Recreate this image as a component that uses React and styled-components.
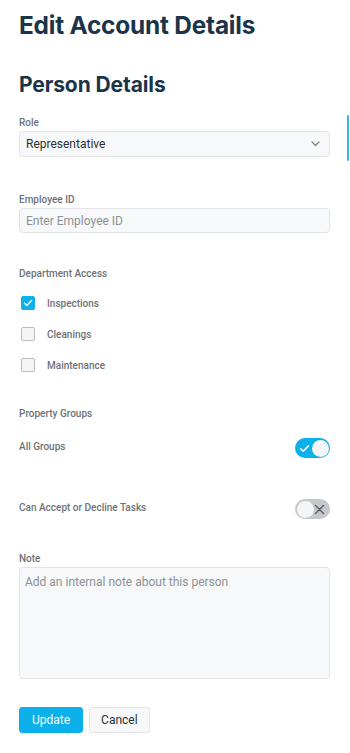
import React, { useState } from "react";
import styled, { createGlobalStyle } from "styled-components";

const GlobalStyle = createGlobalStyle`
  html, body {
    margin: 0;
    padding: 0;
    background: #ffffff;
  }
  body {
    font-family: Roboto, "Liberation Sans", Arial, sans-serif;
    -webkit-font-smoothing: antialiased;
  }
  * {
    box-sizing: border-box;
  }
`;

const Page = styled.div`
  position: relative;
  width: 350px;
  padding: 8px 20px 20px 19px;
`;

// the blue scroll indicator at the right edge
const ScrollMark = styled.div`
  position: absolute;
  right: 1px;
  top: 115px;
  width: 2px;
  height: 46px;
  background: #36b6e8;
  border-radius: 1px;
`;

const Title = styled.h1`
  margin: 0;
  font-family: Inter, "Noto Sans", sans-serif;
  font-weight: 700;
  font-size: 24.4px;
  line-height: 34px;
  letter-spacing: -0.2px;
  color: #1a3549;
`;

const Subtitle = styled.h2`
  margin: 29px 0 0;
  font-family: Inter, "Noto Sans", sans-serif;
  font-weight: 700;
  font-size: 21px;
  line-height: 28px;
  letter-spacing: -0.1px;
  color: #1a3549;
`;

const Field = styled.div`
  margin-top: ${(p) => p.$gap || 0}px;
`;

const Label = styled.div`
  font-size: 10px;
  line-height: 12px;
  font-weight: 500;
  color: #6d7278;
  margin-bottom: ${(p) => (p.$mb != null ? p.$mb : 2)}px;
`;

const SelectBox = styled.div`
  display: flex;
  align-items: center;
  justify-content: space-between;
  height: 26px;
  padding: 0 9px 0 6px;
  background: #f7f8fa;
  border: 1px solid #e2e4e8;
  border-radius: 4px;
  font-size: 12px;
  color: #2b2f33;
`;

const TextInput = styled.input`
  display: block;
  width: 100%;
  height: 25px;
  padding: 0 6px;
  background: #f7f8fa;
  border: 1px solid #e2e4e8;
  border-radius: 4px;
  font-family: inherit;
  font-size: 12px;
  color: #2b2f33;
  outline: none;
  &::placeholder {
    color: #8d9196;
  }
`;

const TextArea = styled.textarea`
  display: block;
  width: 100%;
  height: 112px;
  padding: 6px 5px;
  background: #f7f8fa;
  border: 1px solid #e2e4e8;
  border-radius: 4px;
  font-family: inherit;
  font-size: 12px;
  line-height: 16px;
  color: #2b2f33;
  resize: none;
  outline: none;
  &::placeholder {
    color: #8d9196;
  }
`;

const CheckList = styled.div`
  display: flex;
  flex-direction: column;
  gap: 17px;
  margin-top: 16px;
`;

const CheckRow = styled.label`
  display: flex;
  align-items: center;
  gap: 12px;
  padding-left: 2px;
  font-size: 10px;
  font-weight: 500;
  color: #6d7278;
  cursor: pointer;
`;

const Box = styled.span`
  display: flex;
  align-items: center;
  justify-content: center;
  width: 14px;
  height: 14px;
  border-radius: 2px;
  background: ${(p) => (p.$on ? "#0cb0ea" : "#f4f5f7")};
  border: 1px solid ${(p) => (p.$on ? "#0cb0ea" : "#b9bdc2")};
`;

const SwitchRow = styled.div`
  display: flex;
  align-items: center;
  justify-content: space-between;
  margin-top: ${(p) => p.$gap || 0}px;
`;

const SwitchLabel = styled.div`
  align-self: flex-start;
  padding-top: 3px;
  font-size: 10px;
  font-weight: 500;
  color: #6d7278;
`;

const Switch = styled.button`
  position: relative;
  display: flex;
  align-items: center;
  width: 35px;
  height: 20px;
  padding: 0;
  border-radius: 10px;
  border: none;
  background: ${(p) => (p.$on ? "#0cb0ea" : "#c4c7cb")};
  cursor: pointer;
`;

const Knob = styled.span`
  position: absolute;
  top: 1.5px;
  left: ${(p) => (p.$on ? "16.5px" : "1.5px")};
  width: 17px;
  height: 17px;
  border-radius: 50%;
  background: #f4f5f6;
`;

const SwitchIcon = styled.span`
  position: absolute;
  top: 0;
  bottom: 0;
  left: ${(p) => (p.$on ? "4px" : "19px")};
  display: flex;
  align-items: center;
`;

const Actions = styled.div`
  display: flex;
  gap: 6px;
  margin-top: 28px;
`;

const Button = styled.button`
  height: 26px;
  padding: 0 ${(p) => (p.$primary ? 12 : 11)}px;
  border-radius: 3px;
  font-family: inherit;
  font-size: 12px;
  color: ${(p) => (p.$primary ? "#ffffff" : "#2b2f33")};
  background: ${(p) => (p.$primary ? "#0cb0ea" : "#f7f8fa")};
  border: 1px solid ${(p) => (p.$primary ? "#0cb0ea" : "#e2e4e8")};
  cursor: pointer;
`;

const Chevron = () => (
  <svg width="9" height="6" viewBox="0 0 9 6">
    <path d="M1 1l3.5 3.5L8 1" fill="none" stroke="#7d8388" strokeWidth="1.2" strokeLinecap="round" strokeLinejoin="round" />
  </svg>
);

const Tick = ({ size = 10, color = "#fff" }) => (
  <svg width={size} height={size} viewBox="0 0 10 10">
    <path d="M1.5 5.2l2.3 2.3L8.6 2.6" fill="none" stroke={color} strokeWidth="1.4" strokeLinecap="round" strokeLinejoin="round" />
  </svg>
);

const Cross = () => (
  <svg width="11" height="11" viewBox="0 0 11 11">
    <path d="M1.5 1.5l8 8M9.5 1.5l-8 8" fill="none" stroke="#55595e" strokeWidth="1.3" strokeLinecap="round" />
  </svg>
);

const Checkbox = ({ checked, label, onToggle }) => (
  <CheckRow onClick={onToggle}>
    <Box $on={checked}>{checked && <Tick />}</Box>
    {label}
  </CheckRow>
);

const Toggle = ({ on, onToggle }) => (
  <Switch $on={on} onClick={onToggle}>
    <SwitchIcon $on={on}>{on ? <Tick size={11} /> : <Cross />}</SwitchIcon>
    <Knob $on={on} />
  </Switch>
);

export default function App() {
  const [dept, setDept] = useState({ Inspections: true, Cleanings: false, Maintenance: false });
  const [allGroups, setAllGroups] = useState(true);
  const [canAccept, setCanAccept] = useState(false);

  return (
    <>
      <GlobalStyle />
      <Page>
        <ScrollMark />
        <Title>Edit Account Details</Title>
        <Subtitle>Person Details</Subtitle>

        <Field $gap={18}>
          <Label>Role</Label>
          <SelectBox>
            Representative
            <Chevron />
          </SelectBox>
        </Field>

        <Field $gap={37}>
          <Label>Employee ID</Label>
          <TextInput placeholder="Enter Employee ID" />
        </Field>

        <Field $gap={35}>
          <Label $mb={0}>Department Access</Label>
          <CheckList>
            {Object.keys(dept).map((k) => (
              <Checkbox
                key={k}
                label={k}
                checked={dept[k]}
                onToggle={() => setDept({ ...dept, [k]: !dept[k] })}
              />
            ))}
          </CheckList>
        </Field>

        <Field $gap={36}>
          <Label $mb={0}>Property Groups</Label>
        </Field>

        <SwitchRow $gap={18}>
          <SwitchLabel>All Groups</SwitchLabel>
          <Toggle on={allGroups} onToggle={() => setAllGroups(!allGroups)} />
        </SwitchRow>

        <SwitchRow $gap={41}>
          <SwitchLabel>Can Accept or Decline Tasks</SwitchLabel>
          <Toggle on={canAccept} onToggle={() => setCanAccept(!canAccept)} />
        </SwitchRow>

        <Field $gap={34}>
          <Label>Note</Label>
          <TextArea placeholder="Add an internal note about this person" />
        </Field>

        <Actions>
          <Button $primary>Update</Button>
          <Button>Cancel</Button>
        </Actions>
      </Page>
    </>
  );
}
